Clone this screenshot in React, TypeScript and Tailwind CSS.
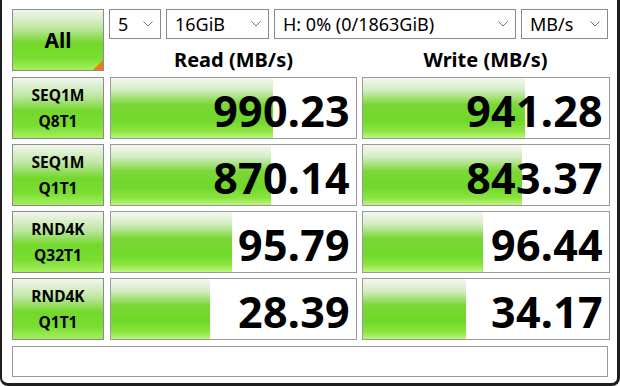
import React from 'react';

const rows = [
  { l1: 'SEQ1M', l2: 'Q8T1', read: '990.23', readW: 162, write: '941.28', writeW: 162 },
  { l1: 'SEQ1M', l2: 'Q1T1', read: '870.14', readW: 160, write: '843.37', writeW: 159 },
  { l1: 'RND4K', l2: 'Q32T1', read: '95.79', readW: 121, write: '96.44', writeW: 120 },
  { l1: 'RND4K', l2: 'Q1T1', read: '28.39', readW: 99, write: '34.17', writeW: 103 },
];

const font = { fontFamily: '"Noto Sans", "Open Sans", sans-serif' };

function Chevron() {
  return (
    <svg width="10" height="6" viewBox="0 0 10 6" className="shrink-0">
      <polyline points="0.5,0.5 5,5 9.5,0.5" fill="none" stroke="#707070" strokeWidth="1" />
    </svg>
  );
}

function Select({ w, text }: { w: string; text: string }) {
  return (
    <div className={`${w} h-[30px] flex items-center justify-between border border-[#8a8a8a] bg-white pl-[8px] pr-[7px]`}>
      <span className="text-[18px] text-black leading-none">{text}</span>
      <Chevron />
    </div>
  );
}

function Bar({ value, width }: { value: string; width: number }) {
  return (
    <div className="relative h-[62px] border border-[#9a9a9a] bg-white flex items-center justify-end pr-[6px] pt-[4px]">
      <div
        className="absolute left-0 top-0 bottom-0 bg-[linear-gradient(180deg,#f4f7f2_0%,#d4ecc4_20%,#7bd736_44%,#6fd82a_70%,#8be43e_88%,#bdf581_100%)]"
        style={{ width }}
      />
      <span className="relative text-[43px] font-bold text-black leading-none tracking-[0.3px]">{value}</span>
    </div>
  );
}

export default function App() {
  return (
    <div
      className="w-[620px] h-[386px] bg-white border-l-2 border-r-[3px] border-b-[3px] border-[#1e1e1e] rounded-b-[8px] overflow-hidden pl-[10px] pt-[9px]"
      style={font}
    >
      {/* top */}
      <div className="flex">
        <div className="relative w-[92px] h-[62px] border border-[#8c8c8c] bg-[linear-gradient(180deg,#f1f6ee_0%,#bfe6a3_30%,#74d82c_55%,#7ade31_80%,#a6ef5f_100%)] flex items-center justify-center">
          <span className="text-[21px] font-bold text-black leading-none">All</span>
          <div className="absolute right-0 bottom-0 w-0 h-0 border-l-[10px] border-l-transparent border-b-[10px] border-b-[#f27a1d]" />
        </div>
        <div className="ml-[5px] flex flex-col">
          <div className="flex gap-[5px]">
            <Select w="w-[52px]" text="5" />
            <Select w="w-[103px]" text="16GiB" />
            <Select w="w-[242px]" text="H: 0% (0/1863GiB)" />
            <Select w="w-[87px]" text="MB/s" />
          </div>
          <div className="flex gap-[5px] pl-[1px] mt-[9px]">
            <div className="w-[247px] text-center text-[20px] font-bold text-black leading-[24px]">Read (MB/s)</div>
            <div className="w-[247px] text-center text-[20px] font-bold text-black leading-[24px]">Write (MB/s)</div>
          </div>
        </div>
      </div>

      {/* rows */}
      <div className="mt-[5px] flex flex-col gap-[5px]">
        {rows.map((r, i) => (
          <div key={i} className="grid grid-cols-[92px_247px_247px] gap-x-[6px]">
            <div className="h-[62px] border border-[#8c8c8c] bg-[linear-gradient(180deg,#f1f6ee_0%,#bfe6a3_30%,#74d82c_55%,#7ade31_80%,#a6ef5f_100%)] flex flex-col items-center justify-center gap-[7px]">
              <span className="text-[15.5px] font-bold text-black leading-[19px]">{r.l1}</span>
              <span className="text-[15.5px] font-bold text-black leading-[19px]">{r.l2}</span>
            </div>
            <Bar value={r.read} width={r.readW} />
            <div className="-ml-[1px]">
              <Bar value={r.write} width={r.writeW} />
            </div>
          </div>
        ))}
      </div>

      {/* status */}
      <div className="mt-[6px] w-[596px] h-[31px] border border-[#9a9a9a] bg-white" />
    </div>
  );
}
